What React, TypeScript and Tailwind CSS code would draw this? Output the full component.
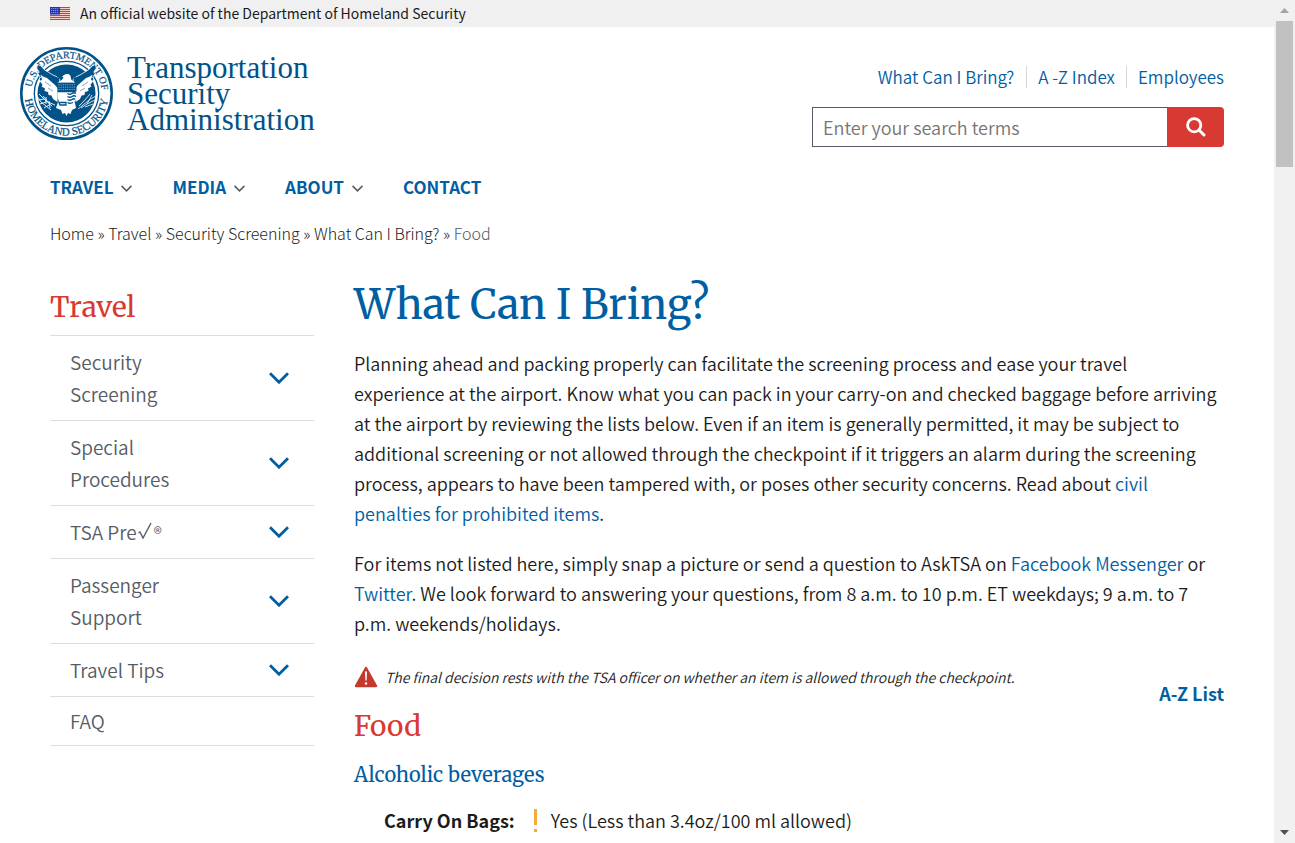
import { Fragment } from "react";

const navItems = [
  { label: "TRAVEL", menu: true },
  { label: "MEDIA", menu: true },
  { label: "ABOUT", menu: true },
  { label: "CONTACT", menu: false },
];

const crumbs = ["Home", "Travel", "Security Screening", "What Can I Bring?"];

const sideItems = ["Security Screening", "Special Procedures", "TSA Pre", "Passenger Support", "Travel Tips"];

function Flag() {
  return (
    <svg className="h-[13px] w-5" viewBox="0 0 20 13" aria-hidden="true">
      <rect width="20" height="13" fill="#fff" />
      {[0, 2, 4, 6, 8, 10, 12].map((y) => (
        <rect key={y} y={y} width="20" height="1.25" fill="#db3e1f" />
      ))}
      <rect width="10" height="7.5" fill="#1e33b1" />
      {[1, 3, 5].map((y) =>
        [1, 3, 5, 7].map((x) => <rect key={`${x}-${y}`} x={x + 0.3} y={y} width="0.9" height="0.9" fill="#c4cbf0" />),
      )}
    </svg>
  );
}

function Wing() {
  return (
    <>
      <path d="M17.5 17.5l3.5 1.4 3 3.6 9 5.5 7 3-1 12-14-2-6-9 1.500-1.500-3-4.500 1.800-.8-2.600-4z" fill="#005288" stroke="#fff" strokeWidth=".8" />
      <path d="M20.500 27.500l2.500 2 4 1.500 8 7 2.500 3v14l-4.500-3-1.500-3.500-3-.5-.5-3-3.500-1 .5-2.500-3.500-2 1.500-2-3-3 2-2z" fill="#fff" />
      <path d="M25 35l6 4M28 41l5 3" stroke="#005288" strokeWidth=".5" fill="none" />
    </>
  );
}

function Seal() {
  return (
    <svg className="size-[93px] shrink-0" viewBox="0 0 93 93" role="img" aria-label="Department of Homeland Security seal">
      <defs>
        <path id="arc-top" d="M11.200 46.500a35.300 35.300 0 0 1 70.600 0v8" />
        <path id="arc-bottom" d="M4.500 40v6.500a42 42 0 0 0 84 0v-6.500" />
      </defs>
      <circle cx="46.5" cy="46.5" r="45.2" fill="#fff" stroke="#005288" strokeWidth="2.600" />
      <circle cx="46.5" cy="46.5" r="32.2" fill="#fff" stroke="#005288" strokeWidth="1.300" />
      <circle cx="46.5" cy="46.5" r="29" fill="#005288" />
      <g fill="#005288" stroke="#005288" strokeWidth=".2">
        <text textAnchor="middle" className="font-['Liberation_Serif',serif] text-[10px] font-normal">
          <textPath href="#arc-top" startOffset="48%">U.S. DEPARTMENT OF</textPath>
        </text>
        <text textAnchor="middle" className="font-['Liberation_Serif',serif] text-[11px] font-normal">
          <textPath href="#arc-bottom" startOffset="50%">HOMELAND SECURITY</textPath>
        </text>
      </g>
      <Wing />
      <g transform="translate(93 0) scale(-1 1)">
        <Wing />
      </g>
      <path d="M17 49l4 6 5 4 5 4M19 47l6 6 7 6M23 49l5 6 7 3M20 57l6-2M24 61l5-3M18 53l6-1M26 50v7M29 54l1 7" stroke="#fff" strokeWidth=".9" fill="none" />
      <path d="M76 49l-7 4-6 5-5 4M75 53l-8 4-6 4M73 57l-8 3M70 47l-6 7-5 5M72 48l-5 9" stroke="#fff" strokeWidth=".8" fill="none" />
      <path d="M33 21.500c8-3 19-3 27 0l-4 8-5 4h-9l-5-4z" fill="#005288" />
      <path d="M42 29.500l3.200-2.200 3.300-.3 2 1.800.8 4 4.200 3h-18l4.500-3 1.500-2.300z" fill="#fff" />
      <path d="M38 55l4-3h10l3 4 1 5-4 2-1.500 4-2.500-1-1.500 3-1.500-3-2.500 1-1.500-4-5-2z" fill="#fff" />
      <path d="M37.500 35.800h19v8.700h-19z" fill="#005288" />
      <path d="M38.500 37.800h17M38.500 40.200h17M38.500 42.600h17" stroke="#fff" strokeWidth=".6" strokeDasharray="1 1.200" />
      <path d="M37.500 45.200h19v6l-3.500 6.500-6 2.500-6-2.500-3.500-6.500z" fill="#fff" />
      <path d="M39 55.500h7v2.500h-6zM47.500 46.500q2.500 1.500 4.500 0t4 0M47.500 49.500q2.500 1.500 4.500 0t4 0M47.500 52.500q2.500 1.500 4.500 0t3 0M47.500 55.500q2.500 1.500 5.500 0" fill="none" stroke="#005288" strokeWidth="1.300" />
    </svg>
  );
}

function Chevron({ className, weight }: { className: string; weight: number }) {
  return (
    <svg className={className} viewBox="0 0 20 12" fill="none" stroke="currentColor" strokeWidth={weight} aria-hidden="true">
      <path d="M1 1.200l9 9 9-9" />
    </svg>
  );
}

function Scrollbar() {
  return (
    <div className="sticky top-0 flex h-screen w-[21px] shrink-0 flex-col items-center justify-between bg-[#f1f1f1] py-2" aria-hidden="true">
      <div className="flex flex-col items-center gap-2">
        <svg className="h-[5px] w-[9px]" viewBox="0 0 9 5"><path d="M0 5l4.500-5L9 5z" fill="#a3a3a3" /></svg>
        <div className="h-[146px] w-[17px] bg-[#c1c1c1]" />
      </div>
      <svg className="h-[5px] w-[9px]" viewBox="0 0 9 5"><path d="M0 0l4.500 5L9 0z" fill="#505050" /></svg>
    </div>
  );
}

export default function App() {
  return (
    <div className="flex min-h-screen items-start bg-white font-['Noto_Sans_CJK_SC','Open_Sans',sans-serif] font-[350] text-[#1b1b1b]">
      <div className="min-w-0 flex-1">
        <div className="flex h-[27px] items-center gap-[10px] bg-[#f0f0f0] px-[50px] text-[14px] leading-5 font-normal">
          <Flag />
          <p className="pb-0.5">An official website of the Department of Homeland Security</p>
        </div>

        <header className="pr-[50px] pl-5">
          <div className="flex justify-between pt-5">
            <a href="#" className="flex items-start gap-[14px]">
              <Seal />
              <span className="pt-2 font-['Liberation_Serif',serif] text-[31px] leading-[26px] font-normal text-[#005288]">
                Transportation
                <br />
                Security
                <br />
                Administration
              </span>
            </a>
            <div className="flex w-[412px] flex-col items-end gap-[19px] pt-[19px]">
              <ul className="flex h-[22px] items-center text-[17px] leading-[22px] text-[#005ea2]">
                <li className="pr-3"><a href="#">What Can I Bring?</a></li>
                <li className="border-l border-[#d5d7d9] px-[11px]"><a href="#">A -Z Index</a></li>
                <li className="border-l border-[#d5d7d9] pl-[11px]"><a href="#">Employees</a></li>
              </ul>
              <form className="flex h-10 w-full" role="search">
                <label htmlFor="search" className="sr-only">Search</label>
                <input
                  id="search"
                  type="search"
                  placeholder="Enter your search terms"
                  className="min-w-0 flex-1 border border-r-0 border-[#565c65] px-[10px] text-[18px] leading-[30px] placeholder:text-[#757575]"
                />
                <button type="submit" aria-label="Search" className="flex w-[57px] items-center justify-center rounded-r bg-[#d83933]">
                  <svg className="size-5" viewBox="0 0 20 20" fill="none" stroke="#fff" aria-hidden="true">
                    <circle cx="8.200" cy="8.200" r="6.600" strokeWidth="2.800" />
                    <path d="M13 13l5 5" strokeWidth="3" strokeLinecap="round" />
                  </svg>
                </button>
              </form>
            </div>
          </div>

          <nav className="mt-7 flex gap-10 pl-[30px] text-[17px] leading-6 font-bold text-[#005ea2]">
            {navItems.map((item) =>
              item.menu ? (
                <button key={item.label} type="button" className="flex items-center gap-2">
                  {item.label}
                  <Chevron className="mt-0.5 h-[7px] w-[11px] text-[#565c65]" weight={2.8} />
                </button>
              ) : (
                <a key={item.label} href="#">{item.label}</a>
              ),
            )}
          </nav>
        </header>

        <p className="mt-[22px] px-[50px] text-[16px] leading-6 font-light text-[#1b1b1b]">
          {crumbs.map((c) => (
            <Fragment key={c}>
              <a href="#">{c}</a>
              <span> » </span>
            </Fragment>
          ))}
          <span className="text-[#565c65]">Food</span>
        </p>

        <div className="flex items-start gap-10 px-[50px] pt-8">
          <aside className="w-[264px] shrink-0 pt-2">
            <h2 className="pb-1.5 font-['Merriweather','DejaVu_Serif_Condensed',serif] text-[28px] leading-[44px] font-normal text-[#d83933]">Travel</h2>
            <ul className="border-t border-[#dcdee0] text-[19px] leading-8 text-[#565c65]">
              {sideItems.map((item) => (
                <li key={item} className="flex items-center justify-between border-b border-[#dcdee0] py-[10px] pr-[25px] pl-5">
                  <a href="#" className="w-[120px]">
                    {item}
                    {item === "TSA Pre" && (
                      <>
                        <svg className="inline-block h-[18px] w-[15px] align-baseline" viewBox="0 0 15 18" fill="none" stroke="currentColor" aria-label="check">
                          <path d="M1.500 11l1.500-1 3 6L14 1" strokeWidth="1.400" />
                        </svg>
                        <span className="pl-0.5 text-[17px] leading-none">®</span>
                      </>
                    )}
                  </a>
                  <button type="button" aria-label={`Expand ${item}`} className="text-[#005ea2]">
                    <Chevron className="h-3 w-5" weight={2.8} />
                  </button>
                </li>
              ))}
              <li className="border-b border-[#dcdee0] py-2 pl-5"><a href="#">FAQ</a></li>
            </ul>
          </aside>

          <main className="min-w-0 flex-1">
            <h1 className="font-['Merriweather','DejaVu_Serif_Condensed',serif] text-[41px] leading-[56px] font-normal text-[#005ea2]">What Can I Bring?</h1>
            <div className="mt-[15px] flex flex-col gap-5 pr-1 text-[18px] leading-[30px]">
              <p>
                Planning ahead and packing properly can facilitate the screening process and ease your travel experience at the airport. Know what you can pack in your carry-on and checked baggage before arriving at the airport by reviewing the lists below. Even if an item is generally permitted, it may be subject to additional screening or not allowed through the checkpoint if it triggers an alarm during the screening process, appears to have been tampered with, or poses other security concerns. Read about <a href="#" className="text-[#005ea2]">civil penalties for prohibited items</a>.
              </p>
              <p>
                For items not listed here, simply snap a picture or send a question to AskTSA on <a href="#" className="text-[#005ea2]">Facebook Messenger</a> or <a href="#" className="text-[#005ea2]">Twitter</a>. We look forward to answering your questions, from 8 a.m. to 10 p.m. ET weekdays; 9 a.m. to 7 p.m. weekends/holidays.
              </p>
            </div>
            <div className="mt-[27px] flex items-start justify-between">
              <p className="flex items-center gap-[7px] text-[14px] leading-6 italic">
                <svg className="h-[22px] w-6" viewBox="0 0 24 22" aria-hidden="true">
                  <path d="M12 2L22 20H2z" fill="#c3392b" stroke="#c3392b" strokeWidth="2.400" strokeLinejoin="round" />
                  <path d="M11 5.500h2l-.4 9h-1.200z" fill="#fff" />
                  <circle cx="12" cy="17.500" r="1.200" fill="#fff" />
                </svg>
                The final decision rests with the TSA officer on whether an item is allowed through the checkpoint.
              </p>
              <a href="#" className="mt-4 text-[18px] leading-6 font-bold text-[#005ea2]">A-Z List</a>
            </div>
            <h2 className="font-['Merriweather','DejaVu_Serif_Condensed',serif] text-[28px] leading-[42px] font-normal text-[#d83933]">Food</h2>
            <h3 className="mt-3 font-['Merriweather','DejaVu_Serif_Condensed',serif] text-[20px] leading-8 font-normal text-[#005ea2]">Alcoholic beverages</h3>
            <p className="mt-[14px] flex items-center pl-[30px] text-[18px] leading-[30px]">
              <strong className="font-bold">Carry On Bags:</strong>
              <svg className="mr-[14px] ml-[19px] h-[23px] w-[3px]" viewBox="0 0 3 23" fill="#f0ad3e" aria-hidden="true">
                <path d="M0 0h3v16H0zM0 20h3v3H0z" />
              </svg>
              Yes (Less than 3.4oz/100 ml allowed)
            </p>
          </main>
        </div>
      </div>
      <Scrollbar />
    </div>
  );
}
